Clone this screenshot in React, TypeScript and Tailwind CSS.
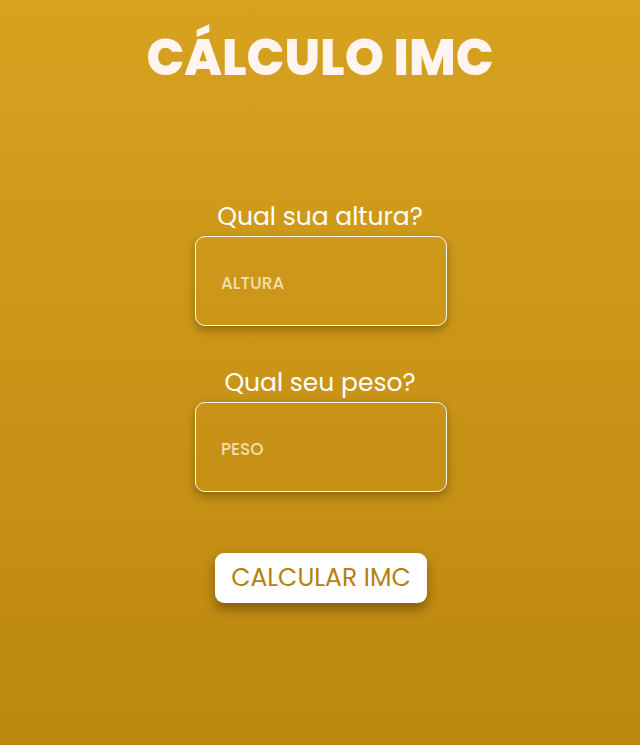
import { useState } from 'react';

export default function App() {
  const [altura, setAltura] = useState('');
  const [peso, setPeso] = useState('');

  return (
    <div
      className="min-h-[745px] w-full bg-gradient-to-b from-[#d7a21f] to-[#bc870e] flex flex-col items-center"
      style={{ fontFamily: 'Poppins, Inter, "Noto Sans", sans-serif' }}
    >
      <h1 className="mt-[26px] text-[50px] leading-[64px] font-extrabold text-[#fff4f0]">
        CÁLCULO IMC
      </h1>

      <div className="mt-[110px] flex flex-col items-center">
        <label className="text-[25px] leading-[34px] text-white">Qual sua altura?</label>
        <input
          value={altura}
          onChange={(e) => setAltura(e.target.value)}
          placeholder="ALTURA"
          className="mt-[2px] ml-[2px] w-[252px] h-[90px] rounded-[10px] border border-white/90 bg-transparent px-[25px] pt-[4px] text-[17px] font-medium text-white placeholder:text-[#f3dfa8] shadow-[0_4px_10px_rgba(0,0,0,0.3)] outline-none"
        />
      </div>

      <div className="mt-[40px] flex flex-col items-center">
        <label className="text-[25px] leading-[34px] text-white">Qual seu peso?</label>
        <input
          value={peso}
          onChange={(e) => setPeso(e.target.value)}
          placeholder="PESO"
          className="mt-[2px] ml-[2px] w-[252px] h-[90px] rounded-[10px] border border-white/90 bg-transparent px-[25px] pt-[4px] text-[17px] font-medium text-white placeholder:text-[#f3dfa8] shadow-[0_4px_10px_rgba(0,0,0,0.3)] outline-none"
        />
      </div>

      <button
        type="button"
        className="mt-[61px] ml-[2px] w-[212px] h-[50px] rounded-[9px] bg-white text-[25px] text-[#b5800f] shadow-[0_6px_12px_rgba(0,0,0,0.35)]"
      >
        CALCULAR IMC
      </button>
    </div>
  );
}
